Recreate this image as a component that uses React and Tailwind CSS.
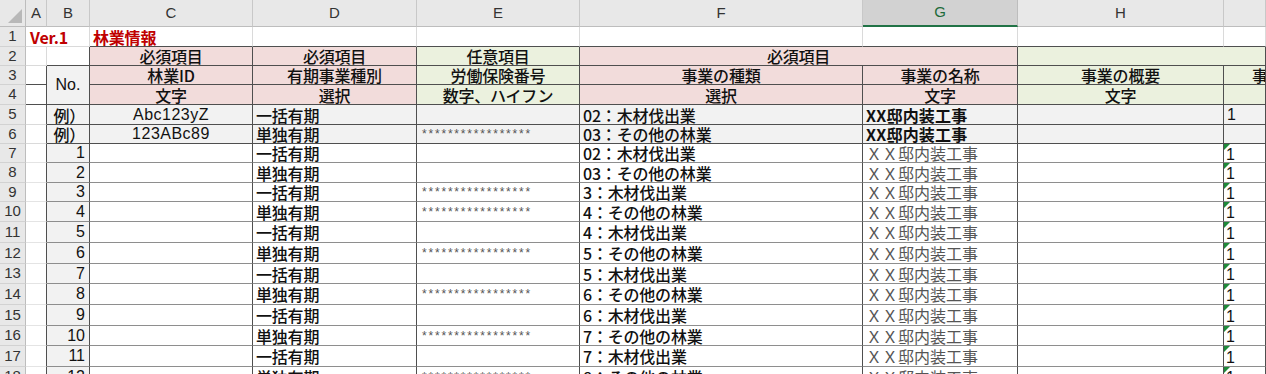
import clsx from "clsx";
import { twMerge } from "tailwind-merge";

const font = { fontFamily: '"Noto Sans CJK JP", "Noto Sans", sans-serif' };

// border presets
const grid = "border-r-[#dadada] border-b-[#dadada]";
const box = "border-r-[#4f4f4f] border-b-[#4f4f4f]";
const data = "border-r-[#4f4f4f] border-b-[#8e8e8e]";
const pink = "bg-[#f2dcdb]";
const green = "bg-[#ebf1de]";
const ex = "bg-[#f2f2f2]";

function Cell({ className = "", children }) {
  return (
    <div
      className={twMerge(
        "relative flex items-center overflow-hidden whitespace-nowrap border-r border-b text-[16px] font-medium leading-[18px] tracking-[-0.2px] text-[#111]",
        className
      )}
    >
      {children}
    </div>
  );
}

function Stars() {
  return (
    <span className="pl-[5px] font-['Liberation_Sans',sans-serif] text-[12px] font-normal tracking-[1.8px] text-[#555]">
      *****************
    </span>
  );
}

function Flag() {
  return (
    <svg className="absolute left-0 top-0" width="6" height="6" viewBox="0 0 6 6">
      <polygon points="0,0 6,0 0,6" fill="#1f8a3a" />
    </svg>
  );
}

const cols = ["A", "B", "C", "D", "E", "F", "G", "H", ""];

const rows = [
  [1, "一括有期", false, "02：木材伐出業"],
  [2, "単独有期", false, "03：その他の林業"],
  [3, "一括有期", true, "3：木材伐出業"],
  [4, "単独有期", true, "4：その他の林業"],
  [5, "一括有期", false, "4：木材伐出業"],
  [6, "単独有期", true, "5：その他の林業"],
  [7, "一括有期", false, "5：木材伐出業"],
  [8, "単独有期", true, "6：その他の林業"],
  [9, "一括有期", false, "6：木材伐出業"],
  [10, "単独有期", true, "7：その他の林業"],
  [11, "一括有期", false, "7：木材伐出業"],
  [12, "単独有期", true, "8：その他の林業"],
];

function RowHead({ n }) {
  return (
    <div className="flex items-center justify-center border-r border-b border-r-[#bdbdbd] border-b-[#d2d2d2] bg-[#e8e8e8] font-['Liberation_Sans',sans-serif] text-[15px] text-[#333]">
      {n}
    </div>
  );
}

export default function App() {
  return (
    <div className="h-[374px] w-[1266px] overflow-hidden bg-white" style={font}>
      <div className="grid grid-cols-[26px_21px_43px_163px_164px_163px_283px_155px_206px_42px] grid-rows-[27px_20px_19px_19px_20px_20px_19px_19px_20px_19px_20px_21px_21px_20px_21px_21px_20px_21px_20px]">
        {/* column letters */}
        <div className="relative border-r border-b border-r-[#bdbdbd] border-b-[#bdbdbd] bg-[#e8e8e8]">
          <svg className="absolute bottom-[3px] right-[3px]" width="14" height="14" viewBox="0 0 14 14">
            <polygon points="14,0 14,14 0,14" fill="#b8b8b8" />
          </svg>
        </div>
        {cols.map((c, i) =>
          c === "G" ? (
            <div
              key={i}
              className="flex items-center justify-center border-r border-b-2 border-r-[#bdbdbd] border-b-[#217346] bg-[#d2d2d2] font-['Liberation_Sans',sans-serif] text-[15px] text-[#1d6b3a]"
            >
              {c}
            </div>
          ) : (
            <div
              key={i}
              className="flex items-center justify-center border-r border-b border-r-[#c8c8c8] border-b-[#bdbdbd] bg-[#e8e8e8] font-['Liberation_Sans',sans-serif] text-[15px] text-[#333]"
            >
              {c}
            </div>
          )
        )}

        {/* row 1 */}
        <RowHead n={1} />
        <Cell className="col-span-2 pl-[4px] font-bold text-[#c00000] border-r-[#dadada] border-b-[#dadada]">
          Ver.1
        </Cell>
        <Cell className="pl-[3px] font-bold text-[#c00000] border-r-[#dadada] border-b-[#4f4f4f]">林業情報</Cell>
        {[0, 1, 2, 3, 4, 5].map((i) => (
          <Cell key={i} className="border-r-[#dadada] border-b-[#4f4f4f]" />
        ))}

        {/* row 2 */}
        <RowHead n={2} />
        <Cell className={grid} />
        <Cell className={box} />
        <Cell className={clsx(box, pink, "justify-center")}>必須項目</Cell>
        <Cell className={clsx(box, pink, "justify-center")}>必須項目</Cell>
        <Cell className={clsx(box, green, "justify-center")}>任意項目</Cell>
        <Cell className={clsx(box, pink, "col-span-2 justify-center")}>必須項目</Cell>
        <Cell className={clsx(box, green, "col-span-2")} />

        {/* row 3 */}
        <RowHead n={3} />
        <Cell className={box} />
        <Cell className={clsx(box, ex, "row-span-2 justify-center font-['Liberation_Sans',sans-serif] font-normal tracking-normal")}>
          No.
        </Cell>
        <Cell className={clsx(box, pink, "justify-center")}>林業ID</Cell>
        <Cell className={clsx(box, pink, "justify-center")}>有期事業種別</Cell>
        <Cell className={clsx(box, green, "justify-center")}>労働保険番号</Cell>
        <Cell className={clsx(box, pink, "justify-center")}>事業の種類</Cell>
        <Cell className={clsx(box, pink, "justify-center")}>事業の名称</Cell>
        <Cell className={clsx(box, green, "justify-center")}>事業の概要</Cell>
        <Cell className={clsx(box, green, "pl-[28px]")}>事業開始日</Cell>

        {/* row 4 */}
        <RowHead n={4} />
        <Cell className={box} />
        <Cell className={clsx(box, pink, "justify-center")}>文字</Cell>
        <Cell className={clsx(box, pink, "justify-center")}>選択</Cell>
        <Cell className={clsx(box, green, "justify-center")}>数字、ハイフン</Cell>
        <Cell className={clsx(box, pink, "justify-center")}>選択</Cell>
        <Cell className={clsx(box, pink, "justify-center")}>文字</Cell>
        <Cell className={clsx(box, green, "justify-center")}>文字</Cell>
        <Cell className={clsx(box, green)} />

        {/* example rows */}
        {[
          ["Abc123yZ", "一括有期", false, "02：木材伐出業", "1"],
          ["123ABc89", "単独有期", true, "03：その他の林業", ""],
        ].map(([id, kind, stars, biz, n], i) => (
          <div key={i} className="contents">
            <RowHead n={5 + i} />
            <Cell className={clsx(box, "border-b-[#dadada]")} />
            <Cell className={clsx(box, ex, "justify-end pr-[4px]")}>例）</Cell>
            <Cell className={clsx(box, ex, "justify-center font-['Liberation_Sans',sans-serif] font-normal tracking-[0.5px]")}>{id}</Cell>
            <Cell className={clsx(box, ex, "pl-[3px]")}>{kind}</Cell>
            <Cell className={clsx(box, ex)}>{stars && <Stars />}</Cell>
            <Cell className={clsx(box, ex, "pl-[3px]")}>{biz}</Cell>
            <Cell className={clsx(box, ex, "pl-[3px] font-bold tracking-[0.2px]")}>XX邸内装工事</Cell>
            <Cell className={clsx(box, ex)} />
            <Cell className={clsx(box, ex, "pl-[3px] font-['Liberation_Sans',sans-serif] font-normal")}>{n}</Cell>
          </div>
        ))}

        {/* data rows */}
        {rows.map(([no, kind, stars, biz]) => (
          <div key={no} className="contents">
            <RowHead n={no + 6} />
            <Cell className="border-r-[#4f4f4f] border-b-[#e4e4e4]" />
            <Cell className={clsx(data, ex, "justify-end pr-[4px] font-['Liberation_Sans',sans-serif] font-normal tracking-normal")}>
              {no}
            </Cell>
            <Cell className={data} />
            <Cell className={clsx(data, "pl-[3px]")}>{kind}</Cell>
            <Cell className={data}>{stars && <Stars />}</Cell>
            <Cell className={clsx(data, "pl-[3px]")}>{biz}</Cell>
            <Cell className={clsx(data, "pl-[3px] font-normal text-[#555] tracking-[0px]")}>ＸＸ邸内装工事</Cell>
            <Cell className={data} />
            <Cell className={clsx(data, "pl-[2px] font-['Liberation_Sans',sans-serif] font-normal")}>
              <Flag />
              <span className="pt-[3px]">1</span>
            </Cell>
          </div>
        ))}
      </div>
    </div>
  );
}
